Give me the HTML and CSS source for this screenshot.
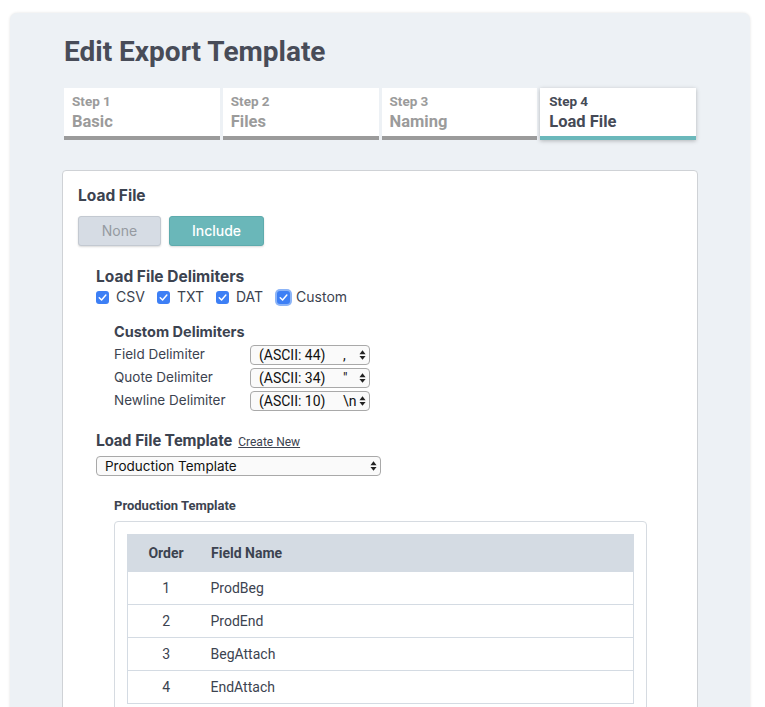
FILE: index.html
```html
<!DOCTYPE html>
<html>
<head>
<meta charset="utf-8">
<link rel="stylesheet" href="styles.css">
</head>
<body>
<div class="panel">
  <h1 class="title">Edit Export Template</h1>
  <div class="tabs">
    <div class="tab"><div class="tab-step">Step 1</div><div class="tab-name">Basic</div></div>
    <div class="tab"><div class="tab-step">Step 2</div><div class="tab-name">Files</div></div>
    <div class="tab"><div class="tab-step">Step 3</div><div class="tab-name">Naming</div></div>
    <div class="tab active"><div class="tab-step">Step 4</div><div class="tab-name">Load File</div></div>
  </div>
  <div class="card">
    <h2 class="card-title">Load File</h2>
    <div class="btn-group">
      <button class="btn btn-none">None</button>
      <button class="btn btn-include">Include</button>
    </div>
    <div class="section">
      <h3 class="sec-title">Load File Delimiters</h3>
      <div class="checks">
        <label class="check"><span class="box"><svg viewBox="0 0 14 14"><path d="M3.5 7.2 L6 9.6 L10.6 4.4" fill="none" stroke="#fff" stroke-width="1.6" stroke-linecap="round" stroke-linejoin="round"/></svg></span>CSV</label>
        <label class="check"><span class="box"><svg viewBox="0 0 14 14"><path d="M3.5 7.2 L6 9.6 L10.6 4.4" fill="none" stroke="#fff" stroke-width="1.6" stroke-linecap="round" stroke-linejoin="round"/></svg></span>TXT</label>
        <label class="check"><span class="box"><svg viewBox="0 0 14 14"><path d="M3.5 7.2 L6 9.6 L10.6 4.4" fill="none" stroke="#fff" stroke-width="1.6" stroke-linecap="round" stroke-linejoin="round"/></svg></span>DAT</label>
        <label class="check"><span class="box focus"><svg viewBox="0 0 14 14"><path d="M3.5 7.2 L6 9.6 L10.6 4.4" fill="none" stroke="#fff" stroke-width="1.6" stroke-linecap="round" stroke-linejoin="round"/></svg></span>Custom</label>
      </div>
      <div class="custom">
        <h4 class="sub-title">Custom Delimiters</h4>
        <div class="delim-row">
          <span class="delim-label">Field Delimiter</span>
          <div class="sel small"><span class="sel-text">(ASCII: 44)</span><span class="sel-char">,</span><span class="arrows"><svg viewBox="0 0 8 12"><path d="M4 0.5 L7.5 5 H0.5 Z M4 11.5 L7.5 7 H0.5 Z" fill="#222"/></svg></span></div>
        </div>
        <div class="delim-row">
          <span class="delim-label">Quote Delimiter</span>
          <div class="sel small"><span class="sel-text">(ASCII: 34)</span><span class="sel-char">"</span><span class="arrows"><svg viewBox="0 0 8 12"><path d="M4 0.5 L7.5 5 H0.5 Z M4 11.5 L7.5 7 H0.5 Z" fill="#222"/></svg></span></div>
        </div>
        <div class="delim-row">
          <span class="delim-label">Newline Delimiter</span>
          <div class="sel small"><span class="sel-text">(ASCII: 10)</span><span class="sel-char">\n</span><span class="arrows"><svg viewBox="0 0 8 12"><path d="M4 0.5 L7.5 5 H0.5 Z M4 11.5 L7.5 7 H0.5 Z" fill="#222"/></svg></span></div>
        </div>
      </div>
    </div>
    <div class="section tmpl">
      <div class="tmpl-head"><h3 class="sec-title">Load File Template</h3><a class="create" href="#">Create New</a></div>
      <div class="sel wide"><span class="sel-text inter">Production Template</span><span class="arrows"><svg viewBox="0 0 8 12"><path d="M4 0.5 L7.5 5 H0.5 Z M4 11.5 L7.5 7 H0.5 Z" fill="#222"/></svg></span></div>
      <div class="preview">
        <h4 class="prev-title">Production Template</h4>
        <div class="prev-box">
          <table class="fields">
            <thead><tr><th class="c-order">Order</th><th class="c-name">Field Name</th></tr></thead>
            <tbody>
              <tr><td class="c-order">1</td><td class="c-name">ProdBeg</td></tr>
              <tr><td class="c-order">2</td><td class="c-name">ProdEnd</td></tr>
              <tr><td class="c-order">3</td><td class="c-name">BegAttach</td></tr>
              <tr><td class="c-order">4</td><td class="c-name">EndAttach</td></tr>
            </tbody>
          </table>
        </div>
      </div>
    </div>
  </div>
</div>
</body>
</html>
```
FILE: styles.css
```css
html, body {
  margin: 0;
  padding: 0;
  background: #ffffff;
  height: 707px;
  overflow: hidden;
}
body {
  font-family: Roboto, "Liberation Sans", sans-serif;
  color: #3c4350;
}
.panel {
  margin: 13px 0 0 10px;
  width: 740px;
  height: 720px;
  box-sizing: border-box;
  background: #edf1f5;
  border-radius: 7px;
  box-shadow: 0 0 3px rgba(0,0,0,0.12);
  padding: 22px 52px 0 52px;
}
.title {
  margin: 0 0 19px 2px;
  font-size: 28px;
  line-height: 34px;
  font-weight: 700;
  color: #484c58;
}
.tabs {
  display: flex;
  gap: 3px;
  margin: 0 2px;
}
.tab {
  width: 156px;
  height: 52px;
  box-sizing: border-box;
  background: #fff;
  border-bottom: 4px solid #9b9b9b;
  padding: 5px 8px 0 8px;
  color: #9b9b9b;
  font-weight: 700;
}
.tab.active {
  border-bottom-color: #6bb8bb;
  color: #454a56;
  box-shadow: 0 1px 4px rgba(0,0,0,0.25);
  padding-left: 9px;
}
.tab-step {
  font-size: 13.5px;
  line-height: 16px;
}
.tab-name {
  font-size: 16.5px;
  line-height: 25px;
}
.card {
  margin-top: 30px;
  background: #fff;
  border: 1px solid #cfd2d6;
  border-radius: 4px;
  padding: 15px 15px 0 15px;
  height: 600px;
}
.card-title {
  margin: 0;
  font-family: Inter, Roboto, sans-serif;
  font-size: 15.5px;
  line-height: 20px;
  font-weight: 700;
  color: #3c4350;
}
.btn-group {
  display: flex;
  gap: 8px;
  margin-top: 10px;
}
.btn {
  height: 30px;
  box-sizing: border-box;
  border-radius: 3px;
  font-family: Inter, Roboto, sans-serif;
  font-size: 14px;
  padding: 0 0 2px 0;
  box-shadow: 0 1px 2px rgba(0,0,0,0.15);
}
.btn-none {
  width: 83px;
  background: #d6dce4;
  border: 1px solid #c3c9d1;
  color: #959aa1;
}
.btn-include {
  width: 95px;
  background: #6ab7b9;
  border: 1px solid #5eabad;
  color: #fff;
  font-weight: 500;
}
.section {
  margin-left: 18px;
}
.btn-group + .section {
  margin-top: 22px;
}
.sec-title {
  margin: 0;
  font-family: Inter, Roboto, sans-serif;
  font-size: 15.5px;
  line-height: 18px;
  font-weight: 700;
  color: #3c4350;
}
.checks {
  display: flex;
  margin-top: 2px;
  font-family: Inter, Roboto, sans-serif;
  font-size: 14px;
  line-height: 18px;
  color: #3c4350;
}
.check {
  display: flex;
  align-items: center;
  margin-right: 12px;
}
.box {
  width: 13px;
  height: 13px;
  border-radius: 3px;
  background: #3d7ff5;
  display: inline-flex;
  margin-right: 7px;
}
.box svg {
  width: 13px;
  height: 13px;
}
.box.focus {
  box-shadow: 0 0 0 2px #8cb4f7;
}
.check:last-child .box { margin-left: 2px; margin-right: 6px; }
.custom {
  margin-left: 18px;
  margin-top: 17px;
}
.sub-title {
  margin: 0 0 4px 0;
  font-family: Inter, Roboto, sans-serif;
  font-size: 14.5px;
  line-height: 18px;
  font-weight: 700;
  color: #3c4350;
}
.delim-row {
  display: flex;
  align-items: center;
  height: 20px;
  margin-bottom: 3px;
}
.delim-label {
  width: 136px;
  font-family: Inter, Roboto, sans-serif;
  font-size: 13.5px;
  color: #3c4350;
  margin-top: -3px;
}
.sel {
  position: relative;
  height: 20px;
  box-sizing: border-box;
  border: 1px solid #a9a9a9;
  border-radius: 4px;
  background: #fafafa;
  display: flex;
  align-items: center;
  font-size: 14px;
  color: #111;
}
.sel.small {
  width: 120px;
  padding-left: 8px;
}
.sel-text {
  white-space: nowrap;
}
.sel-char {
  position: absolute;
  left: 92px;
  top: 0;
  line-height: 18px;
}
.arrows {
  position: absolute;
  right: 3px;
  top: 3px;
  width: 7px;
  height: 12px;
  display: flex;
}
.arrows svg {
  width: 7px;
  height: 12px;
}
.tmpl {
  margin-top: 21px;
}
.tmpl-head {
  display: flex;
  align-items: baseline;
  gap: 6px;
}
.tmpl-head .sec-title {
  font-family: Roboto, sans-serif;
  font-size: 16px;
}
.create {
  font-family: Roboto, sans-serif;
  font-size: 12px;
  color: #3c4350;
  text-decoration: underline;
}
.tmpl .sel.wide {
  width: 285px;
  margin-top: 6px;
  padding-left: 8px;
}
.inter {
  font-family: Inter, Roboto, sans-serif;
  font-size: 13.5px;
  color: #111;
}
.preview {
  margin-left: 18px;
  margin-top: 22px;
}
.prev-title {
  margin: 0 0 7px 0;
  font-family: Roboto, sans-serif;
  font-size: 13px;
  line-height: 16px;
  font-weight: 700;
  color: #3c4350;
}
.prev-box {
  width: 533px;
  box-sizing: border-box;
  border: 1px solid #d6dbe1;
  border-radius: 4px;
  padding: 12px 12px 0 12px;
  height: 300px;
}
.fields {
  width: 100%;
  border-collapse: collapse;
  font-family: Roboto, sans-serif;
  font-size: 14px;
  color: #3c4350;
}
.fields th {
  background: #d4dbe3;
  height: 38px;
  font-weight: 700;
  text-align: left;
  padding: 0;
  border-left: 1px solid #d4dbe3;
  border-right: 1px solid #d4dbe3;
}
.fields td {
  height: 32px;
  padding: 0;
  border-bottom: 1px solid #d4dbe3;
  border-left: 1px solid #d4dbe3;
  border-right: 1px solid #d4dbe3;
}
.fields td.c-order { border-right: none; }
.fields td.c-name { border-left: none; }
.fields .c-order {
  width: 76px;
  text-align: center;
}
.fields .c-name {
  padding-left: 6px;
}
```
